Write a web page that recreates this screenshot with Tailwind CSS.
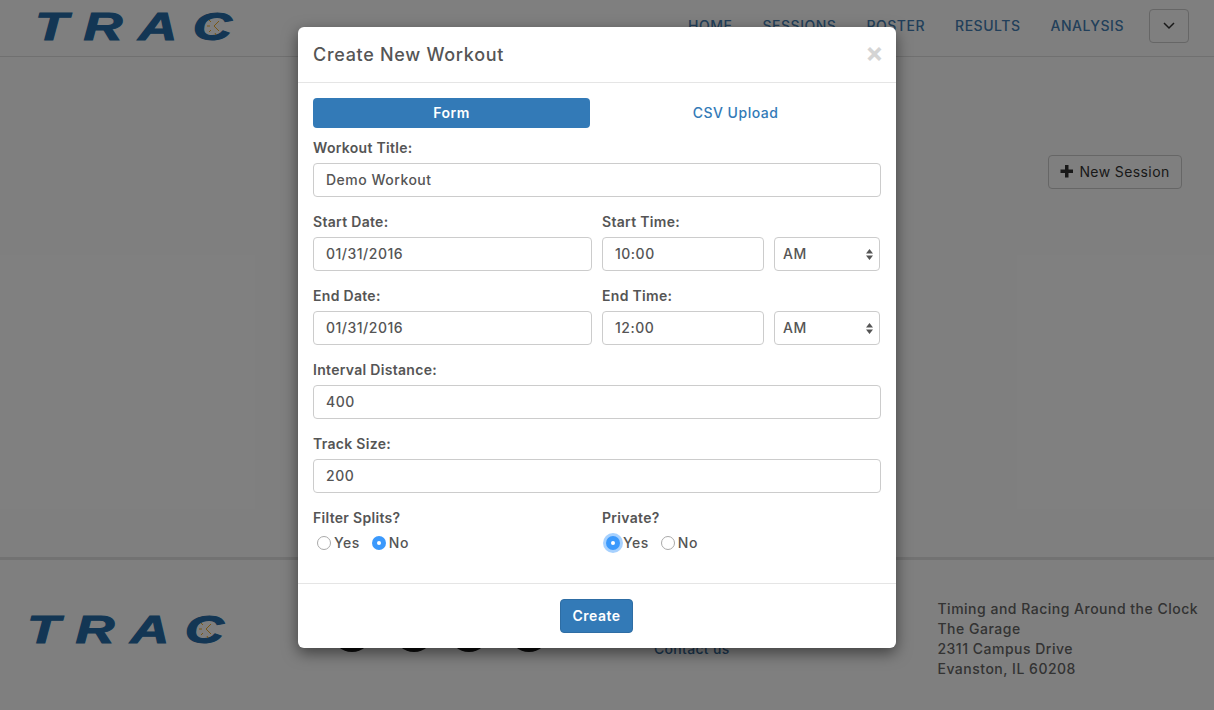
<!DOCTYPE html>
<html lang="en">
<head>
  <meta charset="UTF-8">
  <title>Create New Workout - TRAC</title>
  <script src="https://cdn.jsdelivr.net/npm/@tailwindcss/browser@4"></script>
</head>
<body class="bg-white font-['Inter',sans-serif] text-[#666] overflow-hidden">
  <div class="relative w-[1214px] h-[710px] overflow-hidden flex flex-col">

    <!-- Menu -->
    <header class="h-[57px] border-b border-[#e0e0e0] flex justify-between shrink-0">
      <a class="relative ml-[35px] mt-[13px] w-[200px] h-[28px] flex items-center font-['Liberation_Sans',sans-serif] font-bold italic text-[38px] leading-[28px] tracking-[11px] text-[#266ca8]">
        <span class="origin-left scale-x-[1.42] [-webkit-text-stroke:1px_#266ca8]">TRAC</span>
        <svg class="absolute left-[171px] top-[5px]" width="18" height="18" viewBox="0 0 18 18" fill="none" stroke="#f0ae2c" stroke-width="1"><path d="M13 3 8 8l5 5M3 2l2 2M1 8h3M3 14l2-2M9 15l1 2"/></svg>
      </a>
      <div class="flex items-start">
        <nav class="flex gap-[30px] mt-[17px] text-[14px] leading-[18px] font-medium tracking-[0.53px] text-[#447fb5]">
          <a>HOME</a><a>SESSIONS</a><a>POSTER</a><a>RESULTS</a><a>ANALYSIS</a>
        </nav>
        <button class="ml-[25px] mr-[25px] mt-[9px] w-[40px] h-[34px] border border-[#ccc] rounded flex items-center justify-center">
          <svg width="14" height="10" viewBox="0 0 14 10" fill="none" stroke="#333" stroke-width="1.5"><path d="M2 2l5 5 5-5"/></svg>
        </button>
      </div>
    </header>

    <!-- Content -->
    <main class="flex-1 flex justify-end items-start pt-[98px] pr-[32px]">
      <button class="w-[134px] h-[34px] pb-[2px] border border-[#ccc] rounded flex items-center justify-center gap-[5px] text-[14px] tracking-[0.4px] text-[#333]">
        <svg width="14" height="14" viewBox="0 0 14 14" fill="#333"><path d="M5 1h3.500v4.500H13V9H8.500v4.500H5V9H.500V5.500H5z"/></svg>
        New Session
      </button>
    </main>

    <!-- Footer -->
    <footer class="h-[153px] shrink-0 border-t-[3px] border-[#e4e4e4] flex relative">
      <a class="relative ml-[27px] mt-[56px] w-[200px] h-[28px] flex items-center font-['Liberation_Sans',sans-serif] font-bold italic text-[38px] leading-[28px] tracking-[11px] text-[#266ca8]">
        <span class="origin-left scale-x-[1.42] [-webkit-text-stroke:1px_#266ca8]">TRAC</span>
        <svg class="absolute left-[171px] top-[5px]" width="18" height="18" viewBox="0 0 18 18" fill="none" stroke="#f0ae2c" stroke-width="1"><path d="M13 3 8 8l5 5M3 2l2 2M1 8h3M3 14l2-2M9 15l1 2"/></svg>
      </a>
      <div class="flex mt-[52px] ml-[105px] h-[40px]">
        <span class="w-[40px] h-[40px] rounded-full bg-black/90"></span>
        <span class="w-[40px] h-[40px] rounded-full bg-black/90 ml-[22px]"></span>
        <span class="w-[40px] h-[40px] rounded-full bg-black/90 ml-[15px]"></span>
        <span class="w-[40px] h-[40px] rounded-full bg-black/90 ml-[20px]"></span>
      </div>
      <a class="ml-[105px] mt-[79px] h-[20px] text-[14px] leading-[20px] font-medium tracking-[0.3px] text-[#3a6f9f]">Contact us</a>
      <div class="ml-[208px] mt-[39px] text-[14px] leading-[20px] font-medium tracking-[0.5px] text-[#666] whitespace-nowrap">
        <p>Timing and Racing Around the Clock</p>
        <p>The Garage</p>
        <p>2311 Campus Drive</p>
        <p>Evanston, IL 60208</p>
      </div>
    </footer>

    <div class="absolute inset-0 bg-black/50"></div>

    <!-- Modal -->
    <div class="absolute left-[298px] top-[27px] w-[598px] h-[621px] bg-white rounded-md shadow-[0_5px_15px_rgba(0,0,0,0.5)] text-[#555] text-[14px] tracking-[0.5px] flex flex-col">
      <div class="h-[56px] border-b border-[#e5e5e5] px-[15px] flex justify-between items-center shrink-0">
        <h4 class="text-[18px] font-medium tracking-[0.7px]">Create New Workout</h4>
        <span class="text-[27px] font-bold leading-none text-[#d4d4d4] -mt-[5px] -mr-[3px]">×</span>
      </div>

      <div class="flex-1 px-[15px] pt-[15px]">
        <div class="flex h-[30px] mb-[10px] font-semibold">
          <a class="w-[277px] pb-[2px] bg-[#337ab7] text-white rounded flex items-center justify-center">Form</a>
          <a class="w-[291px] pb-[2px] text-[#337ab7] font-medium flex items-center justify-center">CSV Upload</a>
        </div>

        <div class="mb-[15px]">
          <label class="block font-semibold tracking-[0.3px] leading-[20px] mb-[5px]">Workout Title:</label>
          <input value="Demo Workout" class="w-[568px] h-[34px] px-[12px] pb-[2px] border border-[#ccc] rounded outline-none font-medium">
        </div>

        <div class="flex gap-[10px] mb-[15px]">
          <div class="w-[279px]">
            <label class="block font-semibold tracking-[0.3px] leading-[20px] mb-[5px]">Start Date:</label>
            <input value="01/31/2016" class="w-full h-[34px] px-[12px] pb-[2px] border border-[#ccc] rounded outline-none font-medium">
          </div>
          <div class="w-[162px]">
            <label class="block font-semibold tracking-[0.3px] leading-[20px] mb-[5px]">Start Time:</label>
            <input value="10:00" class="w-full h-[34px] px-[12px] pb-[2px] border border-[#ccc] rounded outline-none font-medium">
          </div>
          <div class="w-[106px] pt-[25px]">
            <div class="h-[34px] pl-[8px] pr-[6px] border border-[#ccc] rounded flex items-center justify-between font-medium">
              <span class="pb-[2px]">AM</span>
              <svg width="7" height="11" viewBox="0 0 7 11" fill="#555"><path d="M3.500 0 7 4.500H0zM3.500 11 0 6.500h7z"/></svg>
            </div>
          </div>
        </div>

        <div class="flex gap-[10px] mb-[15px]">
          <div class="w-[279px]">
            <label class="block font-semibold tracking-[0.3px] leading-[20px] mb-[5px]">End Date:</label>
            <input value="01/31/2016" class="w-full h-[34px] px-[12px] pb-[2px] border border-[#ccc] rounded outline-none font-medium">
          </div>
          <div class="w-[162px]">
            <label class="block font-semibold tracking-[0.3px] leading-[20px] mb-[5px]">End Time:</label>
            <input value="12:00" class="w-full h-[34px] px-[12px] pb-[2px] border border-[#ccc] rounded outline-none font-medium">
          </div>
          <div class="w-[106px] pt-[25px]">
            <div class="h-[34px] pl-[8px] pr-[6px] border border-[#ccc] rounded flex items-center justify-between font-medium">
              <span class="pb-[2px]">AM</span>
              <svg width="7" height="11" viewBox="0 0 7 11" fill="#555"><path d="M3.500 0 7 4.500H0zM3.500 11 0 6.500h7z"/></svg>
            </div>
          </div>
        </div>

        <div class="mb-[15px]">
          <label class="block font-semibold tracking-[0.3px] leading-[20px] mb-[5px]">Interval Distance:</label>
          <input value="400" class="w-[568px] h-[34px] px-[12px] pb-[2px] border border-[#ccc] rounded outline-none font-medium">
        </div>

        <div class="mb-[15px]">
          <label class="block font-semibold tracking-[0.3px] leading-[20px] mb-[5px]">Track Size:</label>
          <input value="200" class="w-[568px] h-[34px] px-[12px] pb-[2px] border border-[#ccc] rounded outline-none font-medium">
        </div>

        <div class="flex">
          <div class="w-[289px]">
            <label class="block font-semibold tracking-[0.3px] leading-[20px] mb-[5px]">Filter Splits?</label>
            <div class="flex items-center h-[20px] pl-[4px] font-medium">
              <span class="w-[14px] h-[14px] rounded-full border border-[#aaa] mr-[3px]"></span><span class="pb-[2px]">Yes</span>
              <span class="w-[14px] h-[14px] rounded-full bg-[#3b99fc] ml-[12px] mr-[3px] flex items-center justify-center"><span class="w-[4px] h-[4px] rounded-full bg-white"></span></span><span class="pb-[2px]">No</span>
            </div>
          </div>
          <div>
            <label class="block font-semibold tracking-[0.3px] leading-[20px] mb-[5px]">Private?</label>
            <div class="flex items-center h-[20px] pl-[4px] font-medium">
              <span class="w-[14px] h-[14px] rounded-full bg-[#3b99fc] shadow-[0_0_0_3px_rgba(59,153,252,0.45)] mr-[3px] flex items-center justify-center"><span class="w-[4px] h-[4px] rounded-full bg-white"></span></span><span class="pb-[2px]">Yes</span>
              <span class="w-[14px] h-[14px] rounded-full border border-[#aaa] ml-[12px] mr-[3px]"></span><span class="pb-[2px]">No</span>
            </div>
          </div>
        </div>
      </div>

      <div class="h-[65px] border-t border-[#e5e5e5] flex justify-center pt-[15px] pr-[1px] shrink-0">
        <button class="w-[73px] h-[34px] pb-[2px] bg-[#337ab7] border border-[#2e6da4] text-white rounded font-semibold">Create</button>
      </div>
    </div>
  </div>
</body>
</html>
